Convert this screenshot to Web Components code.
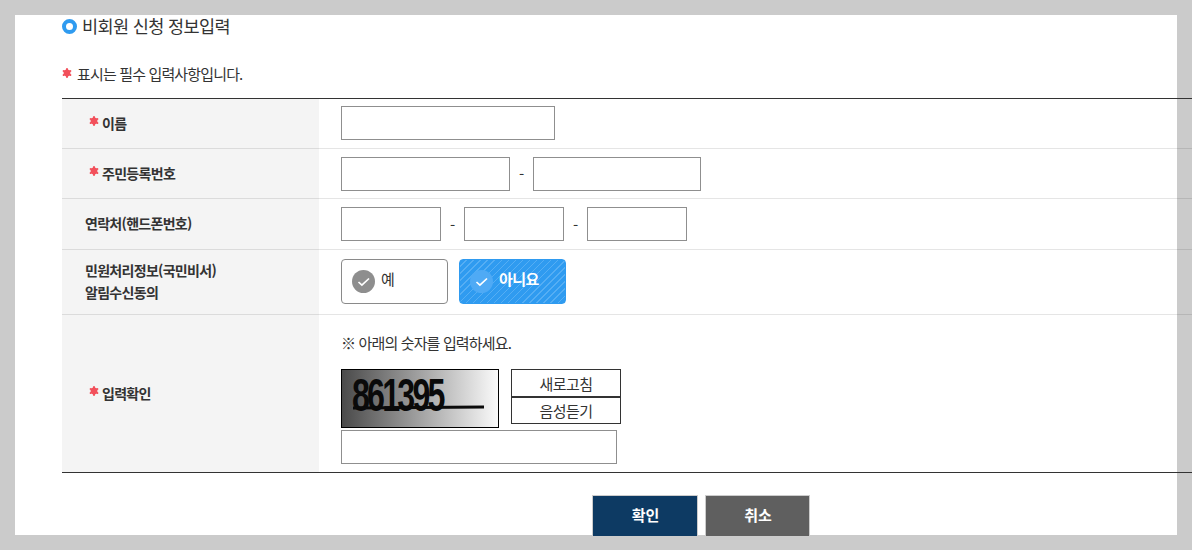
<!DOCTYPE html>
<html lang="ko">
<head>
<meta charset="utf-8">
<title>비회원 신청 정보입력</title>
<style>
html, body {
  margin: 0;
  height: 100%;
  overflow: hidden;
  background: #cbcbcb;
  font-family: "Noto Sans CJK KR", "Noto Sans", sans-serif;
  color: #333;
}
</style>
</head>
<body>
<apply-page>
  <section-title>비회원 신청 정보입력</section-title>
  <required-note>표시는 필수 입력사항입니다.</required-note>
  <form-table>
    <form-row required height="50">
      <span slot="label">이름</span>
      <text-field width="214"></text-field>
    </form-row>
    <form-row required height="50">
      <span slot="label">주민등록번호</span>
      <text-field width="169"></text-field><field-dash></field-dash><text-field width="168"></text-field>
    </form-row>
    <form-row height="51">
      <span slot="label">연락처(핸드폰번호)</span>
      <text-field width="100"></text-field><field-dash></field-dash><text-field width="100"></text-field><field-dash></field-dash><text-field width="100"></text-field>
    </form-row>
    <form-row height="65">
      <span slot="label">민원처리정보(국민비서)<br>알림수신동의</span>
      <choice-button>예</choice-button>
      <choice-button selected>아니요</choice-button>
    </form-row>
    <form-row required height="157" last>
      <span slot="label">입력확인</span>
      <captcha-box></captcha-box>
    </form-row>
  </form-table>
  <form-actions>
    <action-button color="#0d3a63">확인</action-button>
    <action-button color="#5f5f5f">취소</action-button>
  </form-actions>
</apply-page>

<script>
// small helper so each element just declares its template string
function define(name, html, setup) {
  const template = document.createElement("template");
  template.innerHTML = html;
  customElements.define(name, class extends HTMLElement {
    connectedCallback() {
      if (this.shadowRoot) return;
      const root = this.attachShadow({ mode: "open" });
      root.appendChild(template.content.cloneNode(true));
      if (setup) setup(this, root);
    }
  });
}

const star = `<svg class="star" width="10" height="10" viewBox="0 0 10 10" aria-hidden="true"><g stroke="#f2505b" stroke-width="2" stroke-linecap="round"><path d="M5 1v8M1.6 3l6.8 4M8.4 3l-6.8 4"/></g><circle cx="5" cy="5" r="3.4" fill="#f2505b"/></svg>`;

define("apply-page", `
<style>
:host { display: block; box-sizing: border-box; width: 1162px; height: 520px; margin: 15px 0 0 15px; background: #fff; padding-left: 47px; }
</style>
<slot></slot>`);

define("section-title", `
<style>
:host { display: flex; align-items: center; gap: 5px; height: 22px; font-size: 17.5px; letter-spacing: -0.6px; color: #333; }
i { box-sizing: border-box; width: 15px; height: 15px; border: 4px solid #2f9bf0; border-radius: 50%; }
span { margin-top: -2px; }
</style>
<i></i><span><slot></slot></span>`);

define("required-note", `
<style>
:host { display: flex; align-items: center; gap: 5px; height: 20px; margin-top: 26px; padding-bottom: 4px; font-size: 15px; letter-spacing: -0.85px; color: #333; }
.star { margin-top: -1px; }
</style>
${star}<span><slot></slot></span>`);

define("form-table", `
<style>
:host { display: block; width: 1130px; margin-top: 11px; border-top: 1px solid #333; border-bottom: 1px solid #333; }
</style>
<slot></slot>`);

define("form-row", `
<style>
:host { display: grid; grid-template-columns: 257px 1fr; box-sizing: border-box; border-bottom: 1px solid rgba(0, 0, 0, .1); background: linear-gradient(90deg, #f4f4f4 257px, transparent 257px); }
:host([last]) { border-bottom: 0; }
:host(:first-child) .value { padding-bottom: 1px; }
.label { display: flex; align-items: center; gap: 3px; padding: 0 0 2px 23px; font-size: 14px; font-weight: 700; letter-spacing: -0.7px; line-height: 22px; color: #333; }
:host([required]) .label { padding-left: 27px; }
.star { display: none; margin-top: -4px; }
:host([required]) .star { display: block; }
.value { display: flex; align-items: center; padding-left: 22px; }
</style>
<div class="label">${star}<div><slot name="label"></slot></div></div>
<div class="value"><slot></slot></div>`, (el) => {
  el.style.height = el.getAttribute("height") + "px";
});

define("text-field", `
<style>
:host { display: block; }
input { display: block; box-sizing: border-box; height: 34px; width: 100%; margin: 0; border: 1px solid #8f8f8f; background: #fff; outline: 0; }
</style>
<input type="text">`, (el) => {
  el.style.width = el.getAttribute("width") + "px";
});

define("field-dash", `
<style>
:host { display: block; width: 23px; text-align: center; font-size: 15px; color: #333; }
</style>
<span>-</span>`);

define("choice-button", `
<style>
:host { display: flex; align-items: center; box-sizing: border-box; width: 107px; height: 45px; margin: 0 11px 2px 0; padding-left: 10px; gap: 6px; border: 1px solid #8a8a8a; border-radius: 4px; background: #fff; font-size: 15px; letter-spacing: -0.5px; color: #333; }
:host([selected]) { border-color: #2f9bf0; color: #fff; font-weight: 700; background: repeating-linear-gradient(135deg, #2f9bf0 0 4px, #55aef4 4px 5px); }
svg { flex: none; }
span { margin-top: -5px; }
circle { fill: #8e8e8e; }
:host([selected]) circle { fill: #4faaf5; }
</style>
<svg width="23" height="23" viewBox="0 0 23 23" aria-hidden="true"><circle cx="11.5" cy="11.5" r="11.5"/><path d="M6.5 12l3.4 3.2L17 8.5" fill="none" stroke="#fff" stroke-width="1.7"/></svg>
<span><slot></slot></span>`);

define("captcha-box", `
<style>
:host { display: flex; flex-direction: column; padding-top: 2px; }
p { margin: 3px 0 11px 0; height: 30px; line-height: 30px; font-size: 15px; letter-spacing: -0.85px; color: #333; }
.top { display: flex; gap: 12px; align-items: flex-start; }
.pic { box-sizing: border-box; position: relative; width: 158px; height: 59px; border: 1px solid #000; background: linear-gradient(90deg, #4a4a4a, #fafafa); overflow: hidden; }
.pic b { position: absolute; left: 10px; top: -1px; font-family: "Liberation Sans", sans-serif; font-size: 46px; line-height: 52px; font-weight: 700; letter-spacing: -4px; color: #0a0a0a; transform: scaleX(.7); transform-origin: 0 50%; }
.pic svg { position: absolute; left: 0; top: 0; }
.side { display: flex; flex-direction: column; width: 110px; }
button { box-sizing: border-box; height: 28px; margin: 0; padding: 0; border: 1px solid #333; background: #fff; font: inherit; font-size: 15px; letter-spacing: -0.5px; color: #333; }
button + button { height: 27px; }
.answer { box-sizing: border-box; width: 276px; height: 34px; margin-top: 2px; border: 1px solid #8f8f8f; background: #fff; }
</style>
<p>※ 아래의 숫자를 입력하세요.</p>
<div class="top">
  <div class="pic"><b>861395</b><svg width="156" height="57"><path d="M11 38L142 37" stroke="#0a0a0a" stroke-width="3"/></svg></div>
  <div class="side"><button>새로고침</button><button>음성듣기</button></div>
</div>
<input class="answer" type="text">`);

define("form-actions", `
<style>
:host { display: flex; justify-content: flex-start; gap: 7px; margin: 22px 0 0 530px; }
</style>
<slot></slot>`);

define("action-button", `
<style>
:host { display: flex; align-items: center; justify-content: center; box-sizing: border-box; height: 42px; padding: 0 0 3px 1px; border: 1px solid #ccc; font-size: 15px; font-weight: 700; color: #fff; }
</style>
<slot></slot>`, (el) => {
  el.style.background = el.getAttribute("color");
  el.style.width = el.textContent === "확인" ? "106px" : "105px";
});
</script>
</body>
</html>
